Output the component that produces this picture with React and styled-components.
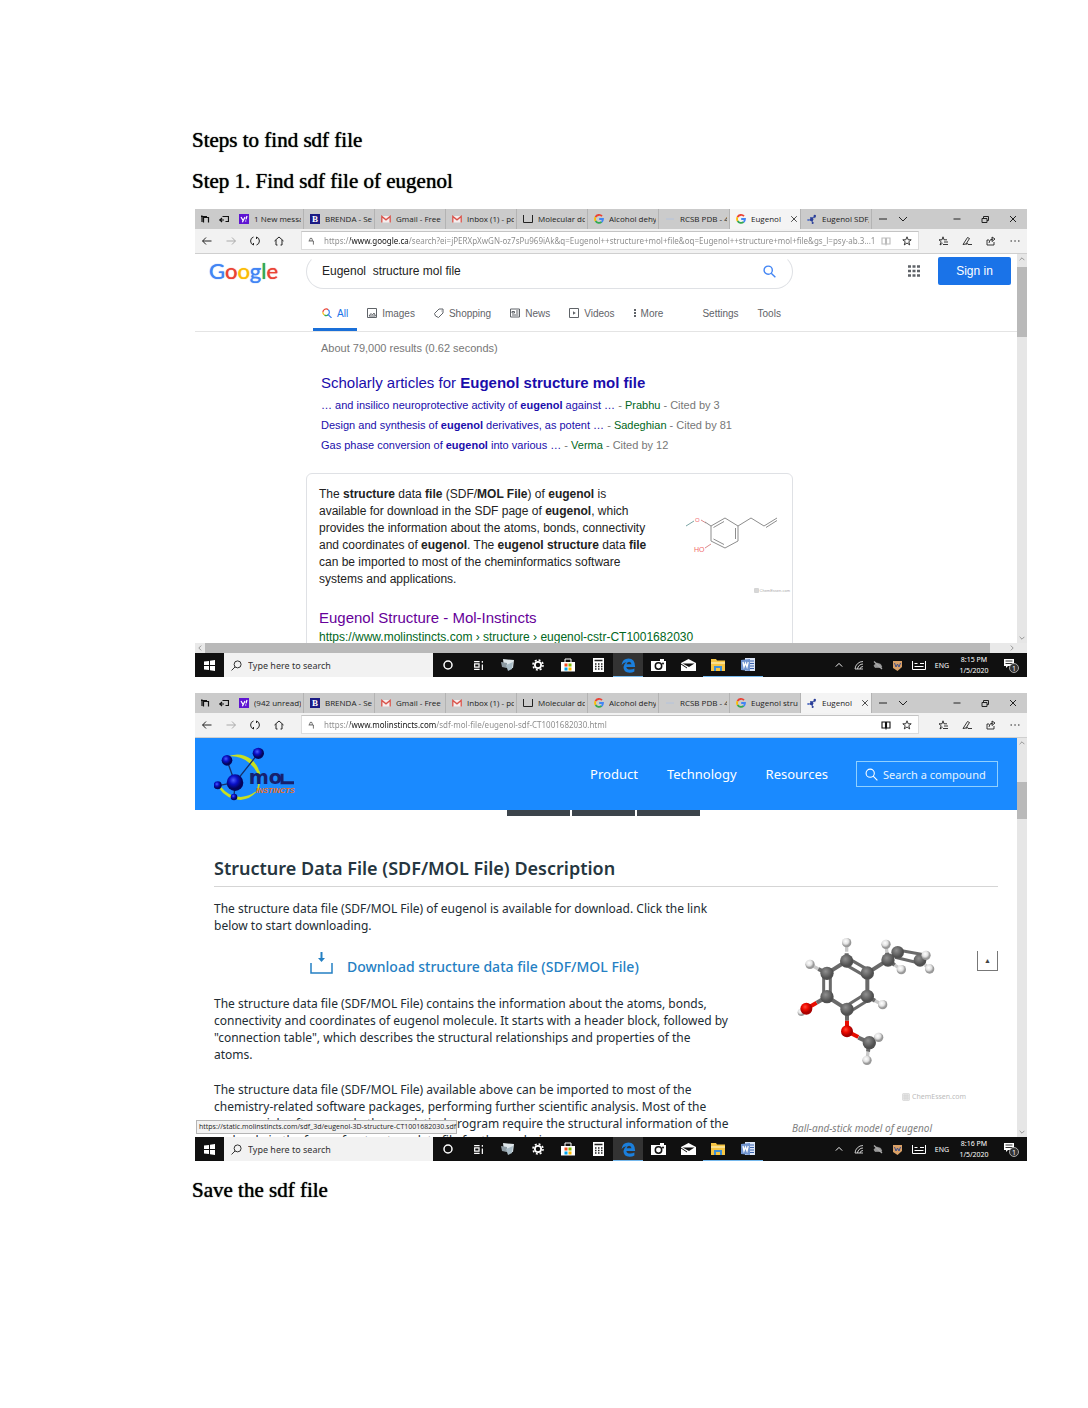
import React from "react";
import styled, { createGlobalStyle } from "styled-components";

const GlobalStyle = createGlobalStyle`
  * { box-sizing: border-box; }
  body { margin: 0; background: #fff; }
  button, input { font: inherit; color: inherit; border: 0; padding: 0; margin: 0; background: none; }
  button { cursor: pointer; }
  a { color: inherit; text-decoration: none; }
  h1, h2, h3, p, figure, ul { margin: 0; padding: 0; font-weight: inherit; font-size: inherit; }
  svg { display: block; flex: none; }
`;

const ui = `"Noto Sans", "Open Sans", sans-serif`;
const arial = `"Liberation Sans", Arial, sans-serif`;

/* ---------- document ---------- */

const Page = styled.main`
  padding: 120px 61px 200px 192px;
  background: #fff;
`;
const DocLine = styled.p`
  font-family: "Liberation Serif", "Times New Roman", serif;
  font-size: 21px;
  line-height: 41px;
  color: #000;
  text-shadow: 0 0 1px #000;
`;
const Shots = styled.div`
  display: flex;
  flex-direction: column;
  gap: 16px;
  margin: 7px 0 9px 3px;
`;

/* ---------- browser window ---------- */

const Window = styled.section`
  font-family: ${ui};
  font-size: 8px;
  color: #222;
`;
const TabStrip = styled.div`
  display: flex;
  height: 20px;
  background: #cbcbcb;
  font-family: "Open Sans", sans-serif;
`;
const TabTools = styled.div`
  display: flex;
  align-items: center;
  justify-content: space-around;
  width: 38px;
  color: #111;
`;
const TabBox = styled.div`
  display: flex;
  align-items: center;
  gap: 5px;
  flex: 0 0 71px;
  padding: 0 2px 0 6px;
  border-right: 1px solid #b3b3b3;
  overflow: hidden;
  background: ${(p) => (p.$active ? "#f4f4f4" : "transparent")};
`;
const TabText = styled.button`
  flex: 1;
  min-width: 0;
  overflow: hidden;
  white-space: nowrap;
  text-align: left;
  line-height: 12px;
`;
const IconButton = styled.button`
  display: flex;
  align-items: center;
  justify-content: center;
  width: ${(p) => p.$w || 24}px;
  flex: none;
  height: 100%;
  color: ${(p) => p.$color || "#222"};
`;
const WindowButtons = styled.div`
  display: flex;
  margin-left: auto;
`;
const Toolbar = styled.form`
  display: flex;
  align-items: center;
  height: 25px;
  background: #f2f2f2;
  border-bottom: 1px solid #cfcfcf;
`;
const NavGroup = styled.div`
  display: flex;
  height: 100%;
  padding: ${(p) => (p.$end ? "0 0 0 12px" : "0 10px 0 0")};
`;
const AddressBox = styled.div`
  display: flex;
  align-items: center;
  flex: 1;
  min-width: 0;
  height: 19px;
  margin-bottom: 1px;
  padding-left: 5px;
  background: #fff;
  border: 1px solid #dcdcdc;
  border-top-color: #c4c4c4;
`;
const AddressInput = styled.input`
  flex: 1;
  min-width: 0;
  margin: 0 2px 0 9px;
  height: 14px;
  font-size: 8px;
  outline: 0;
  color: transparent;
  caret-color: #222;
  background: linear-gradient(90deg, #888 26px, #111 26px, #111 ${(p) => p.$hostEnd}px, #888 ${(p) => p.$hostEnd}px);
  background-clip: text;
  -webkit-background-clip: text;
`;
const View = styled.div`
  position: relative;
  display: grid;
  grid-template-columns: 1fr 10px;
  grid-template-rows: minmax(0, 1fr) auto;
  height: 399px;
  background: #fff;
`;
const Content = styled.div`
  overflow: hidden;
  min-height: 0;
`;
const VTrack = styled.div`
  display: flex;
  flex-direction: column;
  align-items: center;
  background: #e6e6e6;
  color: #777;
`;
const VThumb = styled.div`
  width: 10px;
  height: ${(p) => p.$h}px;
  margin: ${(p) => p.$before}px 0 auto;
  background: #b9b9b9;
`;
const ArrowBox = styled.span`
  display: flex;
  align-items: center;
  justify-content: center;
  flex: none;
  width: 10px;
  height: 10px;
`;
const HTrack = styled.div`
  grid-column: 1 / 3;
  display: flex;
  height: 10px;
  background: #e9e9e9;
  color: #777;
`;
const HThumb = styled.div`
  flex: 1;
  margin-right: 17px;
  background: #b9b9b9;
`;

/* ---------- taskbar ---------- */

const Taskbar = styled.footer`
  display: flex;
  height: 24px;
  background: #101010;
  color: #fff;
`;
const TaskSearch = styled.label`
  display: flex;
  align-items: center;
  gap: 6px;
  width: 209px;
  padding-left: 7px;
  background: #f2f2f2;
  color: #222;
  input { width: 160px; font-size: 9px; outline: 0; }
  input::placeholder { color: #333; opacity: 1; }
`;
const AppButton = styled(IconButton)`
  background: ${(p) => (p.$active ? "#333" : "transparent")};
  border-bottom: 1px solid ${(p) => (p.$open ? "#76b9ed" : "transparent")};
  border-top: 1px solid transparent;
`;
const Tray = styled.div`
  display: flex;
  align-items: center;
  margin-left: auto;
  color: #fff;
`;
const Clock = styled.time`
  width: 42px;
  font-size: 7px;
  line-height: 11px;
  text-align: center;
`;
const Lang = styled.span`
  width: 22px;
  font-size: 7px;
  text-align: center;
`;

/* ---------- search results ---------- */

const Results = styled.div`
  font-family: ${arial};
  color: #222;
`;
const SearchHead = styled.header`
  border-bottom: 1px solid #e4e4e4;
`;
const SearchRow = styled.form`
  display: flex;
  align-items: center;
  height: 34px;
  padding: 0 6px 0 14px;
`;
const GoogleLogo = styled.a`
  width: 97px;
  font-family: Lato, sans-serif;
  font-size: 22px;
  line-height: 32px;
  color: #4285f4;
  text-shadow: 0 0 1px currentColor;
  span { color: #ea4335; text-shadow: 0 0 1px currentColor; }
  span:nth-child(2) { color: #fbbc05; }
  span:nth-child(3) { color: #4285f4; }
  span:nth-child(4) { color: #34a853; }
`;
const Pill = styled.div`
  display: flex;
  align-items: center;
  flex: 0 1 487px;
  height: 35px;
  padding: 0 16px 0 15px;
  border: 1px solid #dfe1e5;
  border-top-color: transparent;
  border-radius: 18px;
  color: #222;
  input { flex: 1; min-width: 0; font-size: 12px; outline: 0; }
`;
const AppsButton = styled(IconButton)`
  margin: 0 18px 0 auto;
`;
const SignIn = styled.a`
  width: 73px;
  border-radius: 2px;
  background: #1a73e8;
  color: #fff;
  font-size: 12px;
  line-height: 28px;
  text-align: center;
`;
const ResultNav = styled.nav`
  display: flex;
  gap: 1px;
  height: 43px;
  padding-left: 118px;
`;
const ResultTab = styled.a`
  display: flex;
  align-items: center;
  gap: 5px;
  padding: 10px 9px 0;
  margin-left: ${(p) => (p.$apart ? 20 : 0)}px;
  font-size: 10px;
  white-space: nowrap;
  color: ${(p) => (p.$active ? "#1a73e8" : "#5f6368")};
  border-bottom: 3px solid ${(p) => (p.$active ? "#1a6fd8" : "transparent")};
`;
const Stats = styled.p`
  padding: 8px 0 17px 126px;
  font-size: 11px;
  line-height: 16px;
  color: #777;
`;
const Scholar = styled.section`
  padding-left: 126px;
  color: #1a0dab;
`;
const ResultTitle = styled.h3`
  font-size: 15px;
  line-height: 20px;
  color: ${(p) => (p.$visited ? "#609" : "#1a0dab")};
`;
const ScholarList = styled.ul`
  list-style: none;
  padding-top: 2px;
  font-size: 11px;
  line-height: 20px;
  white-space: nowrap;
`;
const Author = styled.span`
  color: #006621;
`;
const Muted = styled.span`
  color: #777;
`;
const Card = styled.article`
  max-width: 487px;
  margin: 18px 0 0 111px;
  padding: 12px 0 0 12px;
  border: 1px solid #dfe1e5;
  border-radius: 6px 6px 0 0;
`;
const Snippet = styled.div`
  display: flex;
  justify-content: space-between;
  height: 108px;
  margin-bottom: 14px;
  font-size: 12px;
  line-height: 17px;
  white-space: nowrap;
`;
const Thumb = styled.figure`
  display: flex;
  flex-direction: column;
  align-items: flex-end;
  padding: 26px 2px 0 0;
  > svg { margin-right: 10px; }
`;
const TinyMark = styled.figcaption`
  display: flex;
  align-items: center;
  gap: 1px;
  font-size: 4px;
  line-height: 7px;
  margin-top: auto;
  color: #aaa;
`;
const Crumb = styled.p`
  font-size: 12px;
  line-height: 18px;
  color: #006621;
`;

/* ---------- Mol-Instincts page ---------- */

const MolHead = styled.header`
  display: flex;
  align-items: center;
  height: 72px;
  padding: 0 19px;
  background: #1a8aff;
  color: #fff;
  font-size: 13px;
`;
const MolNav = styled.nav`
  display: flex;
  gap: 29px;
  margin: 0 28px 0 auto;
`;
const CompoundSearch = styled.label`
  display: flex;
  align-items: center;
  gap: 5px;
  width: 142px;
  height: 26px;
  padding-left: 8px;
  border: 1px solid #8fd0ff;
  input { width: 112px; font-size: 11px; outline: 0; }
  input::placeholder { color: #e4f4ff; opacity: 1; }
`;
const DarkTabs = styled.div`
  display: flex;
  gap: 2px;
  padding-left: 312px;
`;
const DarkTab = styled.span`
  width: 63px;
  height: 6px;
  background: #3c444b;
`;
const MolBody = styled.div`
  padding: 38px 19px 0;
`;
const MolTitle = styled.h2`
  padding-bottom: 4px;
  border-bottom: 1px solid #d5d5d5;
  font-size: 18px;
  font-weight: 600;
  line-height: 28px;
  color: #263640;
`;
const Columns = styled.div`
  display: flex;
  justify-content: space-between;
`;
const Copy = styled.div`
  padding-top: 13px;
  font-size: 12px;
  line-height: 17px;
  white-space: nowrap;
  color: #222c33;
  p + p { margin-top: 18px; }
`;
const Download = styled.a`
  display: flex;
  align-items: flex-end;
  gap: 14px;
  height: 26px;
  margin: 18px 0 17px 96px;
  font-size: 14px;
  font-weight: 500;
  line-height: 22px;
  color: #2580c3;
  svg { align-self: flex-start; }
`;
const Side = styled.div`
  display: flex;
  justify-content: space-between;
  align-items: flex-start;
  flex: 0 0 206px;
`;
const Model = styled.figure`
  display: flex;
  flex-direction: column;
  padding-top: 48px;
  white-space: nowrap;
`;
const Watermark = styled.span`
  display: flex;
  align-items: center;
  gap: 2px;
  margin: 25px 0 0 110px;
  font-size: 7px;
  line-height: 14px;
  color: #bbb;
`;
const Caption = styled.figcaption`
  margin-top: 17px;
  font-size: 10px;
  font-style: italic;
  line-height: 14px;
  color: #808080;
`;
const TopButton = styled.button`
  width: 21px;
  height: 20px;
  margin-top: 64px;
  flex: none;
  border: 1px solid #777;
  border-top: 0;
  font-size: 7px;
  line-height: 19px;
  color: #444;
`;
const StatusTip = styled.div`
  position: absolute;
  left: 1px;
  bottom: 3px;
  min-width: 261px;
  padding-left: 2px;
  border: 1px solid #b5b5b5;
  background: #f2f2f2;
  font-family: "Open Sans", sans-serif;
  font-size: 7px;
  line-height: 12px;
  white-space: nowrap;
`;

/* ---------- icons ---------- */

const Line = ({ d, s = 10, w = 1, box = 10, fill = "none", children }) => (
  <svg width={s} height={s} viewBox={`0 0 ${box} ${box}`} fill={fill} stroke="currentColor" strokeWidth={w} aria-hidden="true">
    {d && <path d={d} />}
    {children}
  </svg>
);
const Magnifier = ({ s = 10, w = 1, flip, c = "currentColor" }) => (
  <svg width={s} height={s} viewBox="0 0 12 12" fill="none" stroke={c} strokeWidth={w} aria-hidden="true">
    <g transform={flip ? "translate(12 0) scale(-1 1)" : undefined}>
      <circle cx="4.8" cy="4.8" r="3.8" />
      <path d="M7.6 7.6L11.4 11.4" />
    </g>
  </svg>
);
const GoogleG = () => (
  <svg width="10" height="10" viewBox="0 0 10 10" fill="none" strokeWidth="1.8" aria-hidden="true">
    <path d="M8 2.2A4 4 0 0 0 1.5 3.2" stroke="#ea4335" />
    <path d="M1.5 3.2A4 4 0 0 0 1.6 7" stroke="#fbbc05" />
    <path d="M1.6 7A4 4 0 0 0 7.6 8" stroke="#34a853" />
    <path d="M7.6 8A4 4 0 0 0 9 5H5.2" stroke="#4285f4" />
  </svg>
);
const GmailM = () => (
  <svg width="10" height="10" viewBox="0 0 10 10" aria-hidden="true">
    <path d="M.5 2h9v6.5h-9z" fill="#f7eeee" />
    <path d="M.8 8.5V2.4L5 5.8l4.2-3.4v6.1" fill="none" stroke="#d9534a" strokeWidth="1.3" />
  </svg>
);
const Yahoo = () => (
  <svg width="10" height="10" viewBox="0 0 10 10" aria-hidden="true">
    <path d="M0 0h10v10H0z" fill="#5f14d2" />
    <path d="M2 3l2 3.4M6 3L3.4 8.2M8 2L7 5.4M6.7 6.6v1" stroke="#fff" strokeWidth="1.2" />
  </svg>
);
const Badge = styled.span`
  flex: none;
  width: 10px;
  height: 10px;
  background: #1b1b84;
  color: #fff;
  font: bold 9px/10px "Liberation Serif", serif;
  text-align: center;
`;
const Page10 = () => <Line d="M.5 1v7.5h9V1" />;
const Faint = styled.span`
  color: #b4c3dc;
`;
const MolDots = () => (
  <svg width="10" height="10" viewBox="0 0 10 10" aria-hidden="true">
    <path d="M1 6h3.5L7.5 2M4.5 6L6 8.8M3 3.6h5.4" stroke="#4a5fa8" fill="none" />
    <circle cx="4.6" cy="5.6" r="1.8" fill="#2b3f9a" />
    <circle cx="7.8" cy="2" r="1.2" fill="#2b3f9a" />
    <circle cx="1.2" cy="6" r="1.1" fill="#5b77c8" />
    <circle cx="5.6" cy="9" r="1" fill="#2b3f9a" />
  </svg>
);
const favicons = {
  yahoo: <Yahoo />,
  brenda: <Badge aria-hidden="true">B</Badge>,
  gmail: <GmailM />,
  page: <Page10 />,
  google: <GoogleG />,
  rcsb: <Faint><Line d="M1 5h8" /></Faint>,
  mol: <MolDots />,
};

const MoleculeSketch = () => (
  <svg width="96" height="42" viewBox="0 0 96 42" fill="none" stroke="#8d8d8d" strokeWidth="1" role="img" aria-label="Eugenol skeletal formula">
    <path d="M2 14l8-5" stroke="#7aa5a5" />
    <path d="M17 8l5 3M21 36l6-4" stroke="#d98a8a" />
    <path d="M21 10l6 4L41 6l13 8v15l-13 7-14-7V14M29.5 15.5L40 9.500M51.5 16v11M40 32.500L29.5 27M54 14l13-8 13 8 13-8M82 15.500l11-7" />
    <text x="11" y="10" fontSize="6" fill="#f06a6a" stroke="none" fontFamily="Liberation Sans">O</text>
    <text x="10" y="40" fontSize="7" fill="#f06a6a" stroke="none" fontFamily="Liberation Sans">HO</text>
  </svg>
);

const carbons = [[740, 213], [681, 250], [681, 320], [741, 358], [802, 319], [802, 249]];
const hydrogens = [[740, 158], [630, 223], [848, 344], [904, 239], [989, 237], [836, 442], [801, 511]];
const BallStick = () => (
  <svg width="145" height="130" viewBox="576 135 435 390" role="img" aria-label="Ball-and-stick model of eugenol">
    <defs>
      <radialGradient id="c" cx=".4" cy=".35"><stop offset="0" stopColor="#909090" /><stop offset=".5" stopColor="#707070" /><stop offset="1" stopColor="#505050" /></radialGradient>
      <radialGradient id="h" cx=".4" cy=".35"><stop offset="0" stopColor="#fff" /><stop offset=".6" stopColor="#e2e2e2" /><stop offset="1" stopColor="#999" /></radialGradient>
      <radialGradient id="o" cx=".4" cy=".35"><stop offset="0" stopColor="#ff4a3a" /><stop offset=".5" stopColor="#ee0a00" /><stop offset="1" stopColor="#a80000" /></radialGradient>
    </defs>
    <g stroke="#c9c9c9" strokeWidth="10">
      <path d="M740 185V158M655 237L630 223M825 332L848 344M884 225L904 239M861 190L858 163M975 224L989 237M822 450L836 442M804 485L801 511M970 202L978 198" />
    </g>
    <g stroke="#6a6a6a" strokeWidth="12" fill="none">
      <path d="M681 250L740 213M681 320L741 358M802 319V249L864 210L893 186M740 213V190M681 250L655 237M802 319L825 332M864 210L884 225M864 210L861 188M808 458L804 485M808 458L822 450" />
      <path d="M741 358V392M775 443L808 458" />
    </g>
    <g stroke="#6a6a6a" strokeWidth="9" fill="none">
      <path d="M671 250V320M691 250V320M735 223L797 259M745 205L807 241M737 349L797 311M747 367L807 329" />
      <path d="M893 180L972 194M885 202L960 220" />
    </g>
    <path d="M741 392V424L775 441M619 356L650 338" stroke="#e80c00" strokeWidth="12" fill="none" />
    <path d="M650 338L681 320" stroke="#6a6a6a" strokeWidth="12" />
    <circle cx="604" cy="367" r="11" fill="url(#h)" />
    {carbons.map(([x, y]) => <circle key={x + "-" + y} cx={x} cy={y} r="20" fill="url(#c)" />)}
    <circle cx="893" cy="187" r="19" fill="url(#c)" />
    <circle cx="864" cy="210" r="20" fill="url(#c)" />
    <circle cx="960" cy="211" r="19" fill="url(#c)" />
    <circle cx="808" cy="458" r="20" fill="url(#c)" />
    <circle cx="619" cy="356" r="18" fill="url(#o)" />
    <circle cx="741" cy="424" r="18" fill="url(#o)" />
    <circle cx="858" cy="163" r="14" fill="url(#h)" />
    <circle cx="978" cy="196" r="14" fill="url(#h)" />
    {hydrogens.map(([x, y]) => <circle key={x + "-" + y} cx={x} cy={y} r="14" fill="url(#h)" />)}
  </svg>
);

const MolLogo = () => (
  <svg width="84" height="56" viewBox="72 165 252 168" role="img" aria-label="Mol-Instincts">
    <defs>
      <radialGradient id="b" cx=".4" cy=".35"><stop offset="0" stopColor="#4a5cff" /><stop offset=".5" stopColor="#0a10c8" /><stop offset="1" stopColor="#04045c" /></radialGradient>
    </defs>
    <path d="M108 198Q150 180 184 205Q214 232 208 262Q204 240 178 216Q146 190 108 198Z" fill="#c8e020" />
    <path d="M84 288Q110 326 152 327Q186 324 204 296Q182 316 152 318Q116 318 90 284Z" fill="#c8e020" />
    <path d="M206 240Q212 270 202 300" stroke="#c8e020" strokeWidth="5" fill="none" />
    <path d="M111 208L135 275L205 187M84 284L135 275L132 318" stroke="#15306a" strokeWidth="4" fill="none" />
    <circle cx="111" cy="208" r="16" fill="url(#b)" />
    <circle cx="205" cy="187" r="17" fill="url(#b)" />
    <circle cx="83" cy="283" r="12" fill="url(#b)" />
    <circle cx="132" cy="318" r="10" fill="url(#b)" />
    <circle cx="135" cy="275" r="25" fill="url(#b)" />
    <text x="176" y="280" fontSize="58" fontWeight="700" fontFamily="DejaVu Sans" fill="#16206e">mo</text>
    <path d="M276 248V275H312" stroke="#16206e" strokeWidth="9" fill="none" />
    <text x="198" y="306" fontSize="22" fontWeight="800" fontStyle="italic" fontFamily="Liberation Sans" fill="#f07018">INSTINCTS</text>
  </svg>
);

const Chem = ({ s = 8 }) => <Line s={s} w={0.8} d="M1 1h8v8H1zM1 3.7h8M1 6.3h8M3.7 1v8M6.3 1v8" />;
const Chevron = ({ dir = "up", s = 6 }) => {
  const paths = { up: "M1 7l4-4 4 4", down: "M1 3l4 4 4-4", left: "M7 1L3 5l4 4", right: "M3 1l4 4-4 4" };
  return <Line s={s} d={paths[dir]} w={1.2} />;
};

/* ---------- shared parts ---------- */

function Chrome({ tabs, active, url, hostEnd, faded }) {
  return (
    <>
      <TabStrip>
        <TabTools>
          <Line d="M1 2h1v6M3.5 8.5V3.5h5v5M1 2.5h6" w={1.2} />
          <Line d="M0 6h5M3 4L1 6l2 2M3.5 2.5h6v5h-3" w={1.2} />
        </TabTools>
        {tabs.map(([icon, text], i) => (
          <TabBox key={i} $active={i === active}>
            {favicons[icon]}
            <TabText type="button">{text}</TabText>
            {i === active && <Line d="M1.5 1.5l7 7M8.5 1.5l-7 7" s={8} />}
          </TabBox>
        ))}
        <IconButton $w={22} aria-label="New tab"><Line d="M1 5h8" /></IconButton>
        <IconButton $w={18} aria-label="Tab list"><Line d="M1 3l4 4 4-4" /></IconButton>
        <WindowButtons>
          <IconButton $w={29} aria-label="Minimize"><Line d="M1.5 5h7" /></IconButton>
          <IconButton $w={28} aria-label="Restore"><Line d="M2 4.5h5v4H2zM3.5 4V2.5h5v4H7" /></IconButton>
          <IconButton $w={28} aria-label="Close"><Line d="M2 2l6 6M8 2l-6 6" /></IconButton>
        </WindowButtons>
      </TabStrip>
      <Toolbar onSubmit={(e) => e.preventDefault()}>
        <NavGroup>
          <IconButton type="button" aria-label="Back"><Line d="M.5 5h9M4 1.5L.6 5 4 8.5" /></IconButton>
          <IconButton type="button" aria-label="Forward" $color="#aaa"><Line d="M.5 5h9M6 1.5L9.4 5 6 8.5" /></IconButton>
          <IconButton type="button" aria-label="Refresh"><Line d="M3.5 1A4.2 4.2 0 0 0 3.5 9M6.5 1A4.2 4.2 0 0 1 6.5 9M6.5 1v2M3.5 9V7" /></IconButton>
          <IconButton type="button" aria-label="Home"><Line d="M.5 5L5 1l4.5 4M2 4v5h1.5M8 4v5H6.5" /></IconButton>
        </NavGroup>
        <AddressBox>
          <Line d="M2 5h6v4.5M3.5 5V3a1.5 1.5 0 0 1 3 0v2" s={8} w={0.8} />
          <AddressInput aria-label="Address" defaultValue={url} $hostEnd={hostEnd} />
          <IconButton type="button" $w={20} $color={faded ? "#bbb" : "#111"} aria-label="Reading view"><Line d="M1 2h3.5v6H1zM5.5 2H9v6H5.5zM4.5 9h1" w={1.1} /></IconButton>
          <IconButton type="button" $w={22} aria-label="Add to favorites"><Line d="M5 .8l1.2 3h3L6.8 5.7l.9 3.2L5 7 2.3 8.9l.9-3.2L.8 3.8h3z" w={0.9} /></IconButton>
        </AddressBox>
        <NavGroup $end>
          <IconButton type="button" aria-label="Favorites"><Line d="M5 .8l1 3h3M5 .8l-1 3H1l2.2 2L2 9l2.6-1.8M6 6h4M5 8.5h5" w={0.9} /></IconButton>
          <IconButton type="button" aria-label="Notes"><Line d="M1 8.5L5.5 1.5 7.5 2.5 4 8zM4 8.5Q6 6 6 8.5h4" w={0.9} /></IconButton>
          <IconButton type="button" aria-label="Share"><Line d="M3 4H1v5h7V6M3 7Q3 3 7 3M6 1l3 2-3 2.5z" w={0.9} /></IconButton>
          <IconButton type="button" aria-label="More"><Line d="M.5 5h1.5M4.3 5h1.5M8 5h1.5" w={1.2} /></IconButton>
        </NavGroup>
      </Toolbar>
    </>
  );
}

const apps = [
  ["Cortana", <Line w={1.5}><circle cx="5" cy="5" r="4" /></Line>],
  ["Task view", <Line s={11} d="M1 1.5h5M1 8.5h5M1.5 3.5h4v3h-4zM8.5 1v1.5M8.5 4v5" w={1.1} />],
  ["Pictures", <svg width="14" height="14" viewBox="0 0 14 14"><path d="M2 1l11 1-1 8-9-1z" fill="#dfe7ea" /><path d="M0 4l6 1v5L1 9z" fill="#8d9aa2" /><path d="M5 7l7-3-1 7-4 2z" fill="#a9bcc6" /></svg>],
  ["Settings", <Line s={12}><circle cx="5" cy="5" r="2.6" strokeWidth="1.5" /><circle cx="5" cy="5" r="4.2" strokeWidth="1.3" strokeDasharray="1.65 1.65" /></Line>],
  ["Store", <svg width="14" height="14" viewBox="0 0 14 14"><path d="M0 4h14v9.5H0z" fill="#fff" /><path d="M4 4V1h6v3" fill="none" stroke="#fff" /><path d="M3.5 5.5h3v3h-3z" fill="#f25022" /><path d="M7.5 5.5h3v3h-3z" fill="#7fba00" /><path d="M3.5 9.5h3v3h-3z" fill="#00a4ef" /><path d="M7.5 9.5h3v3h-3z" fill="#ffb900" /></svg>],
  ["Calculator", <svg width="11" height="14" viewBox="0 0 11 14"><path d="M0 0h11v14H0z" fill="#fff" /><path d="M1.5 2.5h8M2 6h1.5M5 6h1.5M8 6h1.5M2 8.5h1.5M5 8.5h1.5M8 8.5h1.5M2 11h1.5M5 11h1.5M8 11h1.5" stroke="#222" strokeWidth="1.3" /></svg>],
  ["Edge", <svg width="15" height="15" viewBox="0 0 14 14"><path d="M.5 6.5Q1.5 .5 7 .5q6 0 6.2 7.8H5q.4 2.5 3.7 2.5 2 0 3.8-1v2.8Q10.5 13.8 8 13.8 2.3 13.6 2.3 8.5q0-2.7 2.8-4.5Q2.5 4.2 .5 6.5zM5.2 5.9h4.6Q9.5 3.4 7.6 3.4 5.6 3.5 5.2 5.9z" fill="#1b7fdc" /></svg>],
  ["Camera", <svg width="15" height="12" viewBox="0 0 15 12"><path d="M0 2h15v10H0z" fill="#fff" /><path d="M9 0h4v2H9z" fill="#fff" /><circle cx="7.5" cy="7" r="3.2" fill="none" stroke="#111" strokeWidth="1.5" /><circle cx="12" cy="4.5" r="1" fill="#111" /></svg>],
  ["Mail", <svg width="15" height="12" viewBox="0 0 15 12"><path d="M0 4l7.5-4L15 4v8H0z" fill="#fff" /><path d="M1.5 4.5h12L8 8z" fill="#111" /><path d="M0 5l6 4" stroke="#111" /></svg>],
  ["File Explorer", <svg width="14" height="12" viewBox="0 0 14 12"><path d="M0 0h5l1 1.5h8V12H0z" fill="#f6c544" /><path d="M0 3h14v2H0z" fill="#fbe08c" /><path d="M3 12V7h8v5H9V9H5v3z" fill="#3f8fd6" /></svg>],
  ["Word", <svg width="14" height="14" viewBox="0 0 14 14"><path d="M4 0h10v13H4z" fill="#dbe5f6" /><path d="M9 3h4M9 5.5h4M9 8h4M9 10.5h4" stroke="#3a62ad" /><path d="M0 2l9-1v12l-9-1z" fill="#6f93cf" /><path d="M2 4l1 5 1.5-4L6 9l1.2-5" fill="none" stroke="#fff" strokeWidth="1.3" /></svg>],
];

function TaskRow({ time }) {
  return (
    <Taskbar>
      <IconButton $w={29} $color="#fff" aria-label="Start">
        <svg width="11" height="11" viewBox="0 0 11 11" fill="#fff"><path d="M0 1.5L5 1v4H0zM6 .8L11 0v5H6zM0 6h5v4L0 9.5zM6 6h5v5l-5-.8z" /></svg>
      </IconButton>
      <TaskSearch>
        <Magnifier s={11} flip />
        <input placeholder="Type here to search" aria-label="Type here to search" />
      </TaskSearch>
      {apps.map(([name, icon], i) => (
        <AppButton key={name} $w={30} $color="#fff" aria-label={name} $active={i === 6} $open={i === 6 || i > 8}>{icon}</AppButton>
      ))}
      <Tray>
        <IconButton $w={20} $color="#fff" aria-label="Hidden icons"><Chevron s={8} /></IconButton>
        <IconButton $w={20} $color="#ddd" aria-label="Network"><Line d="M1 9A8 8 0 0 1 9 1.5M3.5 9A5.5 5.5 0 0 1 9 4M6 9a3 3 0 0 1 3-2.5M1 9h8" w={0.9} /></IconButton>
        <IconButton $w={18} $color="#aaa" aria-label="Cloud"><Line fill="#999" d="M2 7.5Q0 5.5 2 4.5 3 2 5.5 3.5 8 3.5 8.5 6q1 1.5-1 1.5z" w={0.5}><path d="M1 1.5l8 7.5" strokeWidth="1.2" /></Line></IconButton>
        <IconButton $w={20} $color="#fff" aria-label="Antivirus"><svg width="9" height="11" viewBox="0 0 9 11"><path d="M0 1h9v6L4.5 11 0 8z" fill="#d9a066" /><path d="M1.5 3l1.5 4 1.5-3L6 7l1.5-4" stroke="#3c4f8c" fill="none" /></svg></IconButton>
        <IconButton $w={24} $color="#fff" aria-label="Keyboard"><svg width="14" height="9" viewBox="0 0 14 9" fill="none" stroke="#fff"><path d="M.5 0v8.5h13V0M2.5 2.5h3M8 2.5h4M2.5 5.5h9" /></svg></IconButton>
        <Lang>ENG</Lang>
        <Clock>{time}<br />1/5/2020</Clock>
        <IconButton $w={32} $color="#fff" aria-label="Notifications">
          <svg width="15" height="15" viewBox="0 0 15 15"><path d="M0 1h10v7H4L2 10V8H0z" fill="#fff" /><path d="M1.5 3h7M1.5 5.5h7" stroke="#333" /><circle cx="10" cy="10" r="4.5" fill="#333" stroke="#aaa" /><text x="8" y="13" fontSize="7" fill="#fff">1</text></svg>
        </IconButton>
      </Tray>
    </Taskbar>
  );
}

const Scroll = ({ before, h }) => (
  <VTrack aria-hidden="true">
    <ArrowBox><Chevron /></ArrowBox>
    <VThumb $before={before} $h={h} />
    <ArrowBox><Chevron dir="down" /></ArrowBox>
  </VTrack>
);

/* ---------- pages ---------- */

const firstTabs = [
  ["yahoo", "1 New messa"], ["brenda", "BRENDA - Se"], ["gmail", "Gmail - Free"],
  ["gmail", "Inbox (1) - pc"], ["page", "Molecular dc"], ["google", "Alcohol dehy"],
  ["rcsb", "RCSB PDB - 4"], ["google", "Eugenol"], ["mol", "Eugenol SDF,"],
];
const secondTabs = [
  ["yahoo", "(942 unread)"], ["brenda", "BRENDA - Se"], ["gmail", "Gmail - Free"],
  ["gmail", "Inbox (1) - pc"], ["page", "Molecular dc"], ["google", "Alcohol dehy"],
  ["rcsb", "RCSB PDB - 4"], ["google", "Eugenol stru"], ["mol", "Eugenol"],
];

function SearchPage() {
  return (
    <Results>
      <SearchHead>
        <SearchRow onSubmit={(e) => e.preventDefault()}>
          <GoogleLogo href="#" aria-label="Google">G<span>o</span><span>o</span><span>g</span><span>l</span><span>e</span></GoogleLogo>
          <Pill>
            <input aria-label="Search" defaultValue="Eugenol  structure mol file" />
            <button type="submit" aria-label="Search"><Magnifier s={13} w={1.3} c="#4285f4" /></button>
          </Pill>
          <AppsButton type="button" $w={12} $color="#5f6368" aria-label="Google apps">
            <svg width="12" height="12" viewBox="0 0 12 12" stroke="currentColor" strokeWidth="2.6"><path d="M0 1.5h3M4.5 1.5h3M9 1.5h3M0 6h3M4.5 6h3M9 6h3M0 10.5h3M4.5 10.5h3M9 10.5h3" /></svg>
          </AppsButton>
          <SignIn href="#">Sign in</SignIn>
        </SearchRow>
        <ResultNav>
          <ResultTab href="#" $active>
            <svg width="10" height="10" viewBox="0 0 12 12" fill="none" strokeWidth="1.5" aria-hidden="true"><path d="M1 5a4 4 0 0 1 6.5-3" stroke="#ea4335" /><path d="M1 5a4 4 0 0 0 2 3.5" stroke="#fbbc05" /><path d="M3 8.5a4 4 0 0 0 4.5-.5" stroke="#34a853" /><path d="M7.5 2a4 4 0 0 1 0 6l4 4" stroke="#4285f4" /></svg>
            All
          </ResultTab>
          <ResultTab href="#"><Line d="M.5 .5h9v9h-9zM2 8l2-2.5 1.5 1.5L7 5l1.5 3z" />Images</ResultTab>
          <ResultTab href="#"><Line d="M5 1h4v4L4.5 9.5Q.5 8.5.5 5.5zM7 3h.5" />Shopping</ResultTab>
          <ResultTab href="#"><Line d="M.5 1h9v8h-9zM2 3.5h2.5v1.5H2zM6 3h2.5M6 5h2.5M2 7h6.5" />News</ResultTab>
          <ResultTab href="#"><Line d="M.5 .5h9v9h-9z"><path d="M4 3.2v3.6L6.8 5z" fill="currentColor" stroke="none" /></Line>Videos</ResultTab>
          <ResultTab href="#"><svg width="2" height="10" viewBox="0 0 2 10" fill="currentColor"><path d="M0 1h2v2H0zM0 4h2v2H0zM0 7h2v2H0z" /></svg>More</ResultTab>
          <ResultTab href="#" $apart>Settings</ResultTab>
          <ResultTab href="#">Tools</ResultTab>
        </ResultNav>
      </SearchHead>
      <Stats>About 79,000 results (0.62 seconds)</Stats>
      <Scholar>
        <ResultTitle><a href="#">Scholarly articles for <b>Eugenol structure mol file</b></a></ResultTitle>
        <ScholarList>
          <li><a href="#">… and insilico neuroprotective activity of <b>eugenol</b> against …</a> <Muted>-</Muted> <Author>Prabhu</Author> <Muted>- Cited by 3</Muted></li>
          <li><a href="#">Design and synthesis of <b>eugenol</b> derivatives, as potent …</a> <Muted>-</Muted> <Author>Sadeghian</Author> <Muted>- Cited by 81</Muted></li>
          <li><a href="#">Gas phase conversion of <b>eugenol</b> into various …</a> <Muted>-</Muted> <Author>Verma</Author> <Muted>- Cited by 12</Muted></li>
        </ScholarList>
      </Scholar>
      <Card>
        <Snippet>
          <p>
            The <b>structure</b> data <b>file</b> (SDF/<b>MOL File</b>) of <b>eugenol</b> is<br />
            available for download in the SDF page of <b>eugenol</b>, which<br />
            provides the information about the atoms, bonds, connectivity<br />
            and coordinates of <b>eugenol</b>. The <b>eugenol structure</b> data <b>file</b><br />
            can be imported to most of the cheminformatics software<br />
            systems and applications.
          </p>
          <Thumb>
            <MoleculeSketch />
            <TinyMark><Chem s={5} />ChemEssen.com</TinyMark>
          </Thumb>
        </Snippet>
        <ResultTitle $visited><a href="#">Eugenol Structure - Mol-Instincts</a></ResultTitle>
        <Crumb>https://www.molinstincts.com › structure › eugenol-cstr-CT1001682030</Crumb>
      </Card>
    </Results>
  );
}

function MolPage() {
  return (
    <>
      <MolHead>
        <a href="#"><MolLogo /></a>
        <MolNav>
          <a href="#">Product</a>
          <a href="#">Technology</a>
          <a href="#">Resources</a>
        </MolNav>
        <CompoundSearch>
          <Magnifier s={13} />
          <input placeholder="Search a compound" aria-label="Search a compound" />
        </CompoundSearch>
      </MolHead>
      <DarkTabs><DarkTab /><DarkTab /><DarkTab /></DarkTabs>
      <MolBody>
        <MolTitle>Structure Data File (SDF/MOL File) Description</MolTitle>
        <Columns>
          <Copy>
            <p>
              The structure data file (SDF/MOL File) of eugenol is available for download. Click the link<br />
              below to start downloading.
            </p>
            <Download href="#">
              <svg width="23" height="22" viewBox="0 0 23 22" fill="none" stroke="currentColor" strokeWidth="2" aria-hidden="true"><path d="M1 11v10h21v-10" strokeWidth="1.5" /><path d="M11.5 0v7" /><path d="M8 6h7l-3.5 4z" fill="currentColor" stroke="none" /></svg>
              Download structure data file (SDF/MOL File)
            </Download>
            <p>
              The structure data file (SDF/MOL File) contains the information about the atoms, bonds,<br />
              connectivity and coordinates of eugenol molecule. It starts with a header block, followed by<br />
              "connection table", which describes the structural relationships and properties of the<br />
              atoms.
            </p>
            <p>
              The structure data file (SDF/MOL File) available above can be imported to most of the<br />
              chemistry-related software packages, performing further scientific analysis. Most of the<br />
              commercial software and other analytical program require the structural information of the<br />
              molecule in the form of a structure data file for the analysis
            </p>
          </Copy>
          <Side>
            <Model>
              <BallStick />
              <Watermark><Chem s={8} />ChemEssen.com</Watermark>
              <Caption>Ball-and-stick model of eugenol</Caption>
            </Model>
            <TopButton aria-label="Back to top">▲</TopButton>
          </Side>
        </Columns>
      </MolBody>
    </>
  );
}

export default function App() {
  return (
    <>
      <GlobalStyle />
      <Page>
        <DocLine>Steps to find sdf file</DocLine>
        <DocLine>Step 1. Find sdf file of eugenol</DocLine>
        <Shots>
          <Window>
            <Chrome tabs={firstTabs} active={7} faded hostEnd={84}
              url="https://www.google.ca/search?ei=jPERXpXwGN-oz7sPu969iAk&q=Eugenol++structure+mol+file&oq=Eugenol++structure+mol+file&gs_l=psy-ab.3...16669.2" />
            <View>
              <Content><SearchPage /></Content>
              <Scroll before={3} h={70} />
              <HTrack aria-hidden="true"><ArrowBox><Chevron dir="left" /></ArrowBox><HThumb /><ArrowBox><Chevron dir="right" /></ArrowBox><ArrowBox /></HTrack>
            </View>
            <TaskRow time="8:15 PM" />
          </Window>
          <Window>
            <Chrome tabs={secondTabs} active={8} hostEnd={112}
              url="https://www.molinstincts.com/sdf-mol-file/eugenol-sdf-CT1001682030.html" />
            <View>
              <Content><MolPage /></Content>
              <Scroll before={34} h={37} />
              <StatusTip>https://static.molinstincts.com/sdf_3d/eugenol-3D-structure-CT1001682030.sdf</StatusTip>
            </View>
            <TaskRow time="8:16 PM" />
          </Window>
        </Shots>
        <DocLine>Save the sdf file</DocLine>
      </Page>
    </>
  );
}
